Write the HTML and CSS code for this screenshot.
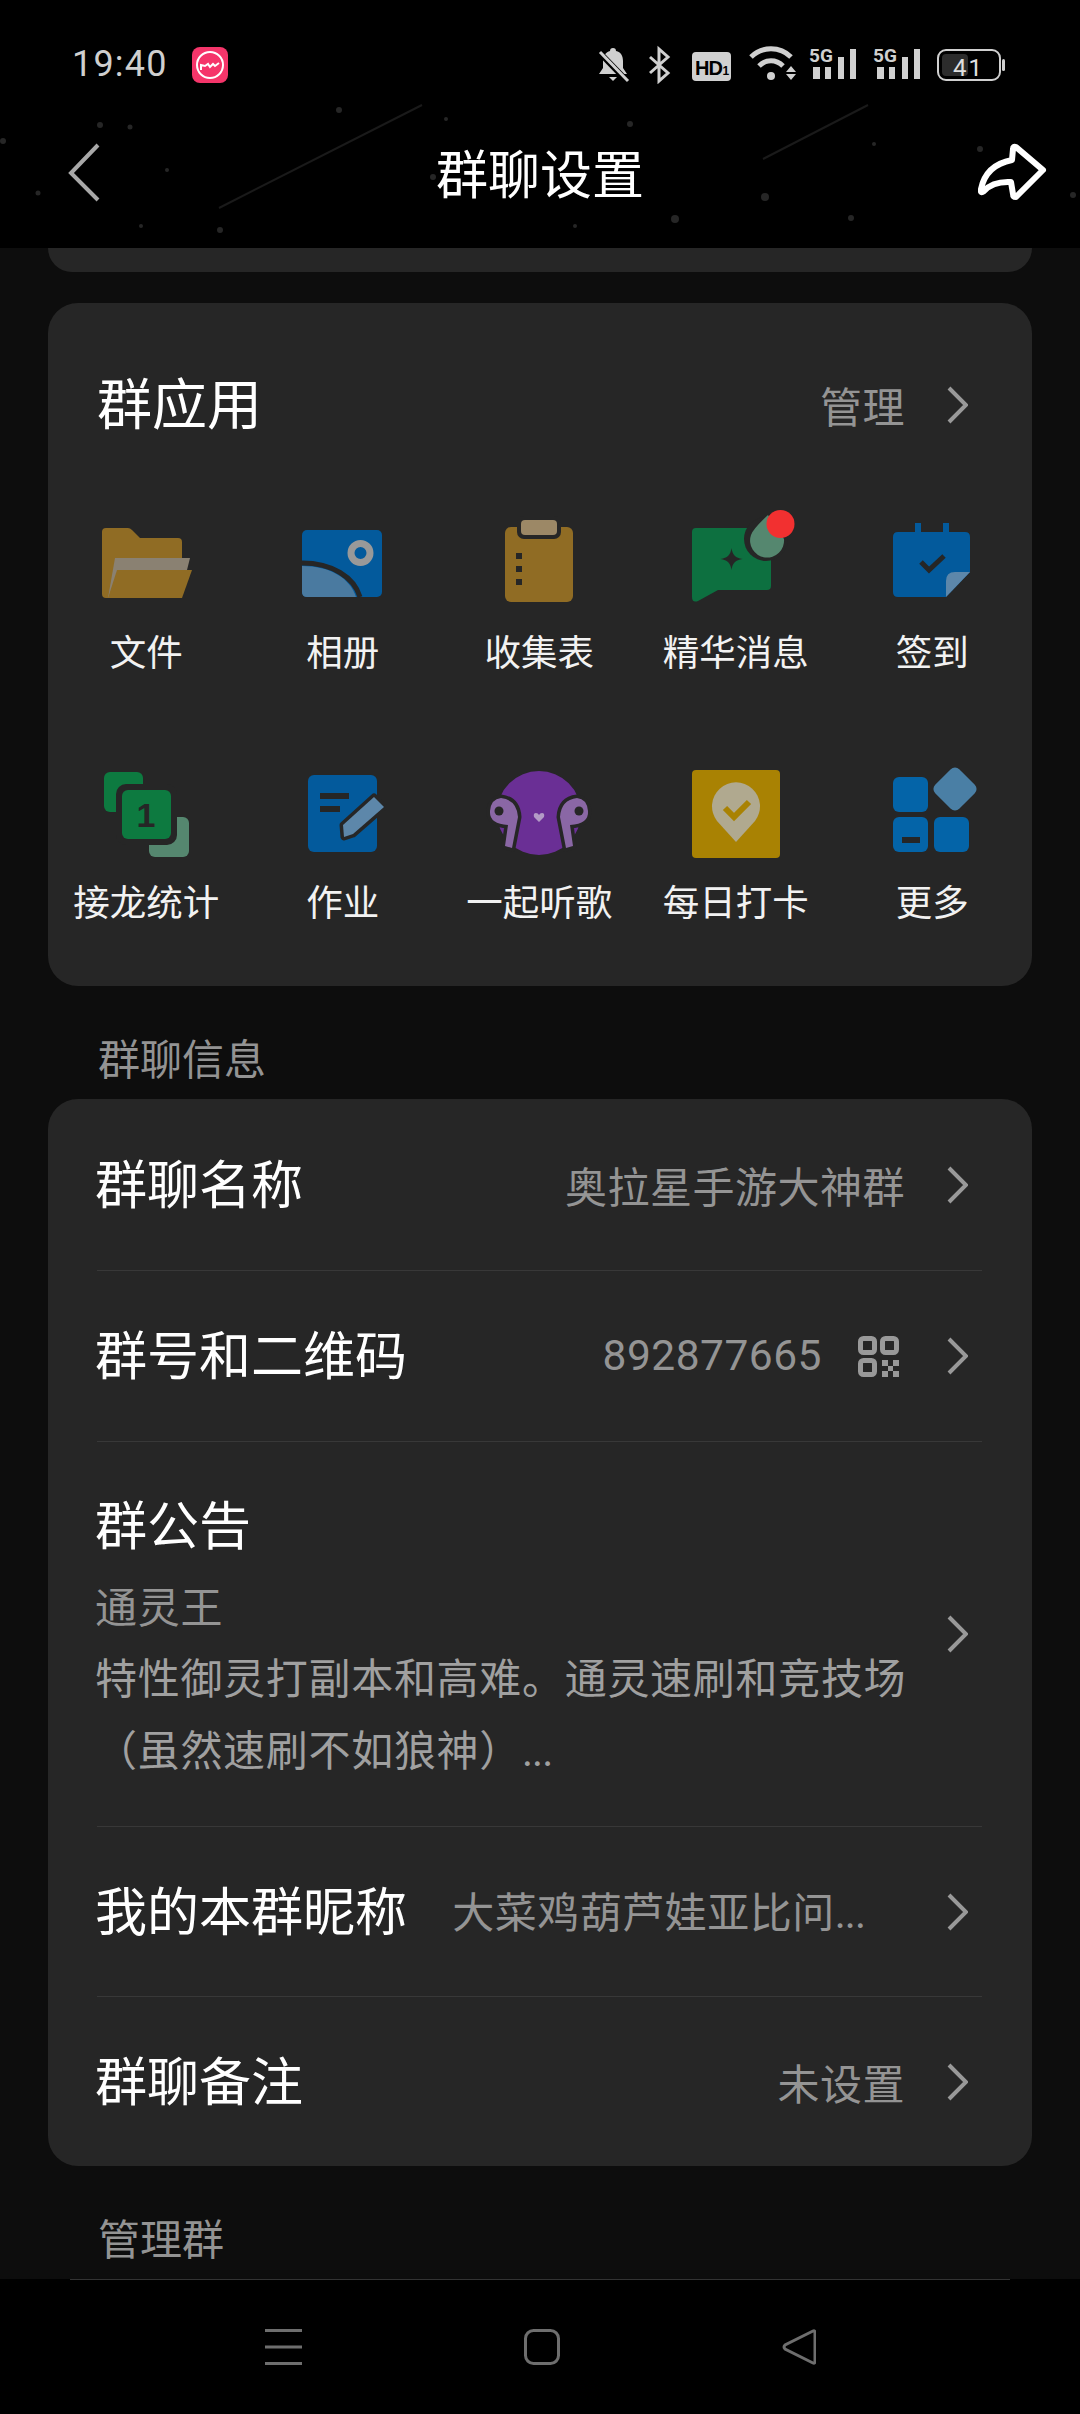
FILE: index.html
```html
<!DOCTYPE html>
<html lang="zh-CN">
<head>
    <meta charset="UTF-8">
    <title>群聊设置</title>
    <link rel="stylesheet" href="styles.css">
</head>
<body>
<div class="page">
    <header class="header">
        <!-- starry background of the theme -->
        <svg class="stars" viewBox="0 0 1080 248" width="1080" height="248" fill="#262626">
            <line x1="422" y1="105" x2="219" y2="208" stroke="#1a1a1a" stroke-width="2"/>
            <line x1="868" y1="105" x2="763" y2="159" stroke="#1a1a1a" stroke-width="2"/>
            <circle cx="339" cy="110" r="3"/><circle cx="100" cy="125" r="3"/><circle cx="130" cy="127" r="2.5"/>
            <circle cx="3" cy="141" r="3"/><circle cx="446" cy="119" r="2"/><circle cx="630" cy="124" r="3"/>
            <circle cx="874" cy="144" r="2"/><circle cx="980" cy="149" r="3"/><circle cx="167" cy="170" r="2"/>
            <circle cx="38" cy="193" r="2.5"/><circle cx="433" cy="177" r="3"/><circle cx="765" cy="197" r="4"/>
            <circle cx="675" cy="219" r="4"/><circle cx="851" cy="218" r="3"/><circle cx="141" cy="226" r="2"/>
            <circle cx="220" cy="230" r="3"/><circle cx="575" cy="226" r="2"/><circle cx="1073" cy="195" r="3"/>
        </svg>
        <div class="statusbar">
            <span class="clock">19:40</span>
            <svg class="app-badge" viewBox="0 0 36 36" width="36" height="36">
                <rect width="36" height="36" rx="8" fill="#f5356a"/>
                <circle cx="18" cy="18" r="13" fill="none" stroke="#fff" stroke-width="2"/>
                <path d="M9 23v-5l4 1 3-2 2 3 3-3 2 2 4-3" fill="none" stroke="#fff" stroke-width="2"/>
            </svg>
            <svg class="status-icons" viewBox="0 0 420 44" width="420" height="44">
                <!-- muted bell -->
                <path d="M23 8c2 0 3 1 3 3 5 1 7 5 7 10v7l4 6H9l4-6v-7c0-5 3-9 7-10 0-2 1-3 3-3z" fill="#d0d0d0"/>
                <path d="M19 37h8l-4 4z" fill="#d0d0d0"/>
                <line x1="8" y1="11" x2="39" y2="43" stroke="#000" stroke-width="6"/>
                <line x1="10" y1="12" x2="38" y2="41" stroke="#d0d0d0" stroke-width="3"/>
                <!-- bluetooth -->
                <path d="M60 17l18 16-9 8V9l9 8-18 16" fill="none" stroke="#d0d0d0" stroke-width="3"/>
                <!-- hd -->
                <rect x="102" y="12" width="39" height="29" rx="4" fill="#d0d0d0"/>
                <text class="hd-text" x="105" y="35">HD</text>
                <text class="hd-small" x="132.500" y="35">1</text>
                <!-- wifi -->
                <g fill="none" stroke="#d0d0d0" stroke-width="5">
                    <path d="M161 17c11-11 29-11 40 0"/>
                    <path d="M169 26c7-7 17-7 24 0"/>
                </g>
                <circle cx="181" cy="36" r="4" fill="#d0d0d0"/>
                <path d="M196 32l5-6 5 6zM196 34l5 6 5-6z" fill="#d0d0d0"/>
                <!-- sim 1 -->
                <text class="net-text" x="219" y="22">5G</text>
                <path d="M223 27h7v12h-7zM235 27h6v12h-6zM248 17h6v22h-6zM260 9h6v30h-6z" fill="#d0d0d0"/>
                <!-- sim 2 -->
                <text class="net-text" x="283" y="22">5G</text>
                <path d="M287 27h7v12h-7zM299 27h6v12h-6zM312 17h6v22h-6zM324 9h6v30h-6z" fill="#d0d0d0"/>
                <!-- battery -->
                <rect x="348" y="10" width="62" height="30" rx="8" fill="none" stroke="#d0d0d0" stroke-width="2"/>
                <rect x="352" y="14" width="26" height="22" rx="4" fill="#2c2c2c"/>
                <rect x="412" y="19" width="3" height="12" rx="1.5" fill="#d0d0d0"/>
                <text class="bat-text" x="363" y="36">41</text>
            </svg>
        </div>
        <div class="toolbar">
            <svg class="back" viewBox="0 0 33 59" width="33" height="59">
                <path d="M31 2L4 30l27 27" fill="none" stroke="#a8a8a8" stroke-width="4"/>
            </svg>
            <h1>群聊设置</h1>
            <svg class="share" viewBox="0 0 69 59" width="69" height="59">
                <path d="M38 4L65 27 38 54q-3 0-3-3l-2-12Q15 38 6 48q-4 3-3-2Q8 22 34 17l1-11q0-3 3-2z" fill="none" stroke="#fff" stroke-width="6" stroke-linejoin="round"/>
            </svg>
        </div>
    </header>

    <main class="content">
        <div class="card-stub"></div>

        <section class="card apps">
            <div class="apps-head">
                <h2>群应用</h2>
                <div class="row-right">
                    <span class="value">管理</span>
                    <svg class="chevron" viewBox="0 0 21 38" width="21" height="38"><path d="M2 2l17 17L2 36"/></svg>
                </div>
            </div>
            <div class="app-grid">
                <div class="app">
                    <svg class="app-icon" viewBox="0 0 100 100" width="100" height="100">
                        <path d="M6 20q0-4 4-4h22q2 0 4 2l8 8h38q4 0 4 4v52q0 4-4 4H10q-4 0-4-4z" fill="#906c24"/>
                        <path d="M19 46h75l-3 12-79 28z" fill="#8a8172"/>
                        <path d="M21 58h75l-10 28H12z" fill="#906c24"/>
                    </svg>
                    <span>文件</span>
                </div>
                <div class="app">
                    <svg class="app-icon" viewBox="0 0 100 100" width="100" height="100">
                        <rect x="9" y="18" width="80" height="67" rx="5" fill="#035a9c"/>
                        <path d="M9 54c28 0 48 12 54 31H14q-5 0-5-5z" fill="#4a7aa0"/>
                        <path d="M9 51c30 0 52 14 58 34" fill="none" stroke="#262626" stroke-width="5"/>
                        <circle cx="67.5" cy="41" r="9.5" fill="#035a9c" stroke="#999" stroke-width="7"/>
                    </svg>
                    <span>相册</span>
                </div>
                <div class="app">
                    <svg class="app-icon" viewBox="0 0 100 100" width="100" height="100">
                        <rect x="16" y="15" width="68" height="75" rx="6" fill="#906c24"/>
                        <rect x="28" y="4" width="44" height="23" rx="7" fill="#262626"/>
                        <rect x="32" y="8" width="36" height="15" rx="4" fill="#9c8866"/>
                        <path d="M27 41h6v6h-6zM27 54h6v6h-6zM27 67h6v6h-6z" fill="#262626"/>
                    </svg>
                    <span>收集表</span>
                </div>
                <div class="app">
                    <svg class="app-icon" viewBox="0 0 100 100" width="100" height="100">
                        <path d="M6 20q0-4 4-4h71q4 0 4 4v54q0 4-4 4H32L12 89q-6 2-6-4z" fill="#0d7040"/>
                        <path d="M45.500 36c1 7 4 10 11 11-7 1-10 4-11 11-1-7-4-10-11-11 7-1 10-4 11-11z" fill="#262626"/>
                        <circle cx="80" cy="27" r="22" fill="#262626"/>
                        <path d="M82 3L98 27a17 17 0 1 1-33-4q2-6 17-20z" fill="#55876f"/>
                        <circle cx="94.500" cy="12" r="14" fill="#f23030"/>
                    </svg>
                    <span>精华消息</span>
                </div>
                <div class="app">
                    <svg class="app-icon" viewBox="0 0 100 100" width="100" height="100">
                        <path d="M33 11h6v10h-6zM61 11h6v10h-6z" fill="#035a9c"/>
                        <path d="M11 25q0-5 5-5h67q5 0 5 5v35L64 85H16q-5 0-5-5z" fill="#035a9c"/>
                        <path d="M64 85V69q0-9 9-9h15z" fill="#5d87aa"/>
                        <path d="M39 50l8 8 15-14" fill="none" stroke="#262626" stroke-width="5"/>
                    </svg>
                    <span>签到</span>
                </div>
                <div class="app">
                    <svg class="app-icon" viewBox="0 0 100 100" width="100" height="100">
                        <rect x="8" y="10" width="39" height="40" rx="6" fill="#0d7a40"/>
                        <rect x="53" y="55" width="40" height="40" rx="6" fill="#55876f"/>
                        <rect x="20" y="22" width="61" height="61" rx="10" fill="#262626"/>
                        <rect x="26" y="28" width="49" height="49" rx="6" fill="#0d7a40"/>
                        <text class="relay-num" x="50" y="65">1</text>
                    </svg>
                    <span>接龙统计</span>
                </div>
                <div class="app">
                    <svg class="app-icon" viewBox="0 0 100 100" width="100" height="100">
                        <rect x="15" y="13" width="69" height="77" rx="6" fill="#035a9c"/>
                        <path d="M27 31h29v6H27zM27 44h20v6H27z" fill="#262626"/>
                        <path d="M81 35l10 10-31 27-9 3-1-12z" fill="#5d87aa" stroke="#262626" stroke-width="7" stroke-linejoin="round" paint-order="stroke"/>
                    </svg>
                    <span>作业</span>
                </div>
                <div class="app">
                    <svg class="app-icon" viewBox="0 0 100 100" width="100" height="100">
                        <circle cx="50" cy="51" r="42" fill="#6a2f95"/>
                        <path class="bud" d="M12 36q16 2 17 19l-6 31-7-2 3-21Q0 62 1 49q1-12 11-13z"/>
                        <path class="bud" transform="matrix(-1 0 0 1 100 0)" d="M12 36q16 2 17 19l-6 31-7-2 3-21Q0 62 1 49q1-12 11-13z"/>
                        <circle cx="10" cy="49" r="4.500" fill="#262626"/>
                        <circle cx="90" cy="49" r="4.500" fill="#262626"/>
                        <path d="M50 60l-5-5q-1-4 2-4 2 0 3 2 1-2 3-2 3 0 2 4z" fill="#b39bc6"/>
                    </svg>
                    <span>一起听歌</span>
                </div>
                <div class="app">
                    <svg class="app-icon" viewBox="0 0 100 100" width="100" height="100">
                        <rect x="6" y="8" width="88" height="88" rx="4" fill="#a98203"/>
                        <path d="M50 80L31 59a24 24 0 1 1 38 0z" fill="#b0a98f"/>
                        <path d="M39 46l9 9 15-15" fill="none" stroke="#a98203" stroke-width="6"/>
                    </svg>
                    <span>每日打卡</span>
                </div>
                <div class="app">
                    <svg class="app-icon" viewBox="0 0 100 100" width="100" height="100">
                        <rect x="11" y="15" width="35" height="35" rx="6" fill="#0464a8"/>
                        <rect x="11" y="55" width="35" height="35" rx="6" fill="#0464a8"/>
                        <rect x="52" y="55" width="35" height="35" rx="6" fill="#0464a8"/>
                        <rect x="56" y="10" width="34" height="34" rx="6" fill="#4a7fa5" transform="rotate(45 73 27)"/>
                        <rect x="20" y="75" width="18" height="6" fill="#262626"/>
                    </svg>
                    <span>更多</span>
                </div>
            </div>
        </section>

        <div class="group-label">群聊信息</div>

        <section class="card info">
            <div class="row">
                <span class="row-title">群聊名称</span>
                <div class="row-right">
                    <span class="value">奥拉星手游大神群</span>
                    <svg class="chevron" viewBox="0 0 21 38" width="21" height="38"><path d="M2 2l17 17L2 36"/></svg>
                </div>
            </div>
            <div class="row">
                <span class="row-title">群号和二维码</span>
                <div class="row-right">
                    <span class="value num">892877665</span>
                    <svg class="qr" viewBox="0 0 41 41" width="41" height="41">
                        <g fill="none" stroke="#999" stroke-width="5">
                            <rect x="2.500" y="2.500" width="14" height="14" rx="3"/>
                            <rect x="24.500" y="2.500" width="14" height="14" rx="3"/>
                            <rect x="2.500" y="24.500" width="14" height="14" rx="3"/>
                        </g>
                        <path d="M24 24h6v6h-6zM35 24h6v6h-6zM30 30h5v5h-5zM24 35h6v6h-6zM35 35h6v6h-6z" fill="#999"/>
                    </svg>
                    <svg class="chevron" viewBox="0 0 21 38" width="21" height="38"><path d="M2 2l17 17L2 36"/></svg>
                </div>
            </div>
            <div class="row row-notice">
                <div class="notice">
                    <div class="row-title">群公告</div>
                    <div class="notice-text muted">通灵王</div>
                    <div class="notice-text">特性御灵打副本和高难。通灵速刷和竞技场</div>
                    <div class="notice-text">（虽然速刷不如狼神）<span class="dots">...</span></div>
                </div>
                <svg class="chevron" viewBox="0 0 21 38" width="21" height="38"><path d="M2 2l17 17L2 36"/></svg>
            </div>
            <div class="row">
                <span class="row-title">我的本群昵称</span>
                <div class="row-right">
                    <span class="value nick">大菜鸡葫芦娃亚比问<span class="dots">...</span></span>
                    <svg class="chevron" viewBox="0 0 21 38" width="21" height="38"><path d="M2 2l17 17L2 36"/></svg>
                </div>
            </div>
            <div class="row">
                <span class="row-title">群聊备注</span>
                <div class="row-right">
                    <span class="value">未设置</span>
                    <svg class="chevron" viewBox="0 0 21 38" width="21" height="38"><path d="M2 2l17 17L2 36"/></svg>
                </div>
            </div>
        </section>

        <div class="group-label">管理群</div>
    </main>

    <nav class="navbar">
        <div class="nav-line"></div>
        <div class="nav-keys">
            <svg viewBox="0 0 37 36" width="37" height="36"><path d="M0 1.500h37M0 18h37M0 34.500h37" stroke="#6e6e6e" stroke-width="3"/></svg>
            <svg viewBox="0 0 36 36" width="36" height="36"><rect x="1.500" y="1.500" width="33" height="33" rx="8" fill="none" stroke="#6e6e6e" stroke-width="3"/></svg>
            <svg viewBox="0 0 34 36" width="34" height="36"><path d="M31 2q2-1 2 2v28q0 3-2 2L3 20q-2-2 0-4z" fill="none" stroke="#6e6e6e" stroke-width="3"/></svg>
        </div>
    </nav>
</div>
</body>
</html>
```

FILE: styles.css
```css
* {
    box-sizing: border-box;
}

body {
    margin: 0;
    background: #000;
    font-family: "Noto Sans CJK SC", "Noto Sans", sans-serif;
    color: #f2f2f2;
}

.page {
    width: 1080px;
    height: 2414px;
    display: flex;
    flex-direction: column;
    overflow: hidden;
}

/* header */
.header {
    position: relative;
    height: 248px;
    background: #000;
    flex-shrink: 0;
}

.stars {
    position: absolute;
    left: 0;
    top: 0;
}

.statusbar {
    position: relative;
    height: 110px;
    padding: 25px 70px 0 72px;
    display: flex;
    align-items: flex-start;
}

.clock {
    font-family: Roboto, sans-serif;
    font-size: 36px;
    line-height: 40px;
    margin-top: 19px;
    color: #cfcfcf;
    letter-spacing: 1.200px;
}

.app-badge {
    margin: 22px 0 0 24px;
}

.status-icons {
    margin-left: auto;
    margin-top: 15px;
}

.hd-text {
    font-family: "Liberation Sans", sans-serif;
    font-size: 20px;
    font-weight: 700;
    letter-spacing: -1px;
    fill: #000;
}

.hd-small {
    font-family: "Liberation Sans", sans-serif;
    font-size: 12px;
    font-weight: 700;
    fill: #000;
}

.net-text {
    font-family: Roboto, sans-serif;
    font-size: 19px;
    font-weight: 700;
    fill: #d0d0d0;
}

.bat-text {
    font-family: Roboto, sans-serif;
    font-size: 24px;
    fill: #e0e0e0;
    letter-spacing: 2px;
}

.relay-num {
    font-family: "Liberation Sans", sans-serif;
    font-size: 34px;
    font-weight: 700;
    fill: #262626;
    text-anchor: middle;
}

.bud {
    fill: #8a67a5;
    stroke: #262626;
    stroke-width: 7;
    paint-order: stroke;
    stroke-linejoin: round;
}

.toolbar {
    position: relative;
    height: 124px;
    padding: 0 33px;
    display: grid;
    grid-template-columns: 1fr auto 1fr;
    align-items: center;
}

.toolbar h1 {
    margin: 0;
    font-size: 52px;
    line-height: 70px;
    font-weight: 400;
    color: #fff;
}

.back {
    margin-left: 34px;
}

.share {
    justify-self: end;
}

/* scrolling content */
.content {
    flex: 1;
    background: #0d0d0d;
    overflow: hidden;
}

.card-stub {
    height: 24px;
    margin: 0 48px;
    background: #262626;
    border-radius: 0 0 28px 28px;
}

.card {
    margin: 0 48px;
    background: #262626;
    border-radius: 30px;
}

.apps {
    margin-top: 31px;
    height: 683px;
    padding-top: 60px;
}

.apps-head {
    height: 80px;
    padding: 0 64px 0 49px;
    display: flex;
    justify-content: space-between;
    align-items: center;
}

.apps-head h2 {
    margin: 0 0 6px;
    font-size: 55px;
    line-height: 74px;
    font-weight: 400;
    color: #fff;
}

.apps-head .row-right {
    margin-top: 3px;
}

.app-grid {
    margin: 69px 1.500px 0 0;
    display: grid;
    grid-template-columns: repeat(5, 1fr);
    row-gap: 85px;
}

.app {
    display: flex;
    flex-direction: column;
    align-items: center;
    gap: 14px;
    font-size: 36.500px;
    line-height: 50px;
    height: 165px;
}

.app-icon {
    overflow: visible;
}

.group-label {
    height: 113px;
    padding: 41px 0 0 98px;
    font-size: 42px;
    line-height: 60px;
    color: #939393;
}

/* list rows */
.row {
    height: 171px;
    margin: 0 50px 0 49px;
    padding-right: 14px;
    display: flex;
    justify-content: space-between;
    align-items: center;
    border-top: 1px solid #383838;
}

.row:first-child {
    border-top: 0;
}

.row:nth-child(4),
.row:nth-child(5) {
    height: 170px;
}

.row-notice {
    height: 385px;
}

.row-title {
    font-size: 52px;
    line-height: 72px;
    color: #fff;
    margin: 0 0 6px -2px;
}

.row-right {
    display: flex;
    align-items: center;
}

.value {
    font-size: 42px;
    letter-spacing: 0.500px;
    line-height: 60px;
    color: #949494;
    margin-right: 42px;
}

.nick {
    margin-right: 82px;
}

.dots {
    font-family: Roboto, sans-serif;
    letter-spacing: -1px;
}

.num {
    font-family: Roboto, sans-serif;
    font-size: 42.500px;
    letter-spacing: 0.500px;
    margin-right: 36px;
}

.qr {
    margin-right: 48px;
}

.chevron {
    fill: none;
    stroke: #999;
    stroke-width: 4;
    flex-shrink: 0;
}

.notice {
    padding-top: 6px;
    margin-left: -2px;
}

.notice .row-title {
    margin: 0 0 10px;
}

.notice-text {
    font-size: 42px;
    letter-spacing: 0.700px;
    line-height: 71.500px;
    color: #a0a0a0;
}

.notice-text.muted {
    color: #949494;
}

/* system navigation */
.navbar {
    height: 135px;
    background: #000;
    flex-shrink: 0;
}

.nav-line {
    height: 1px;
    margin: 0 70px;
    background: #333;
}

.nav-keys {
    height: 134px;
    display: flex;
    justify-content: center;
    align-items: center;
    gap: 222px;
}
```
